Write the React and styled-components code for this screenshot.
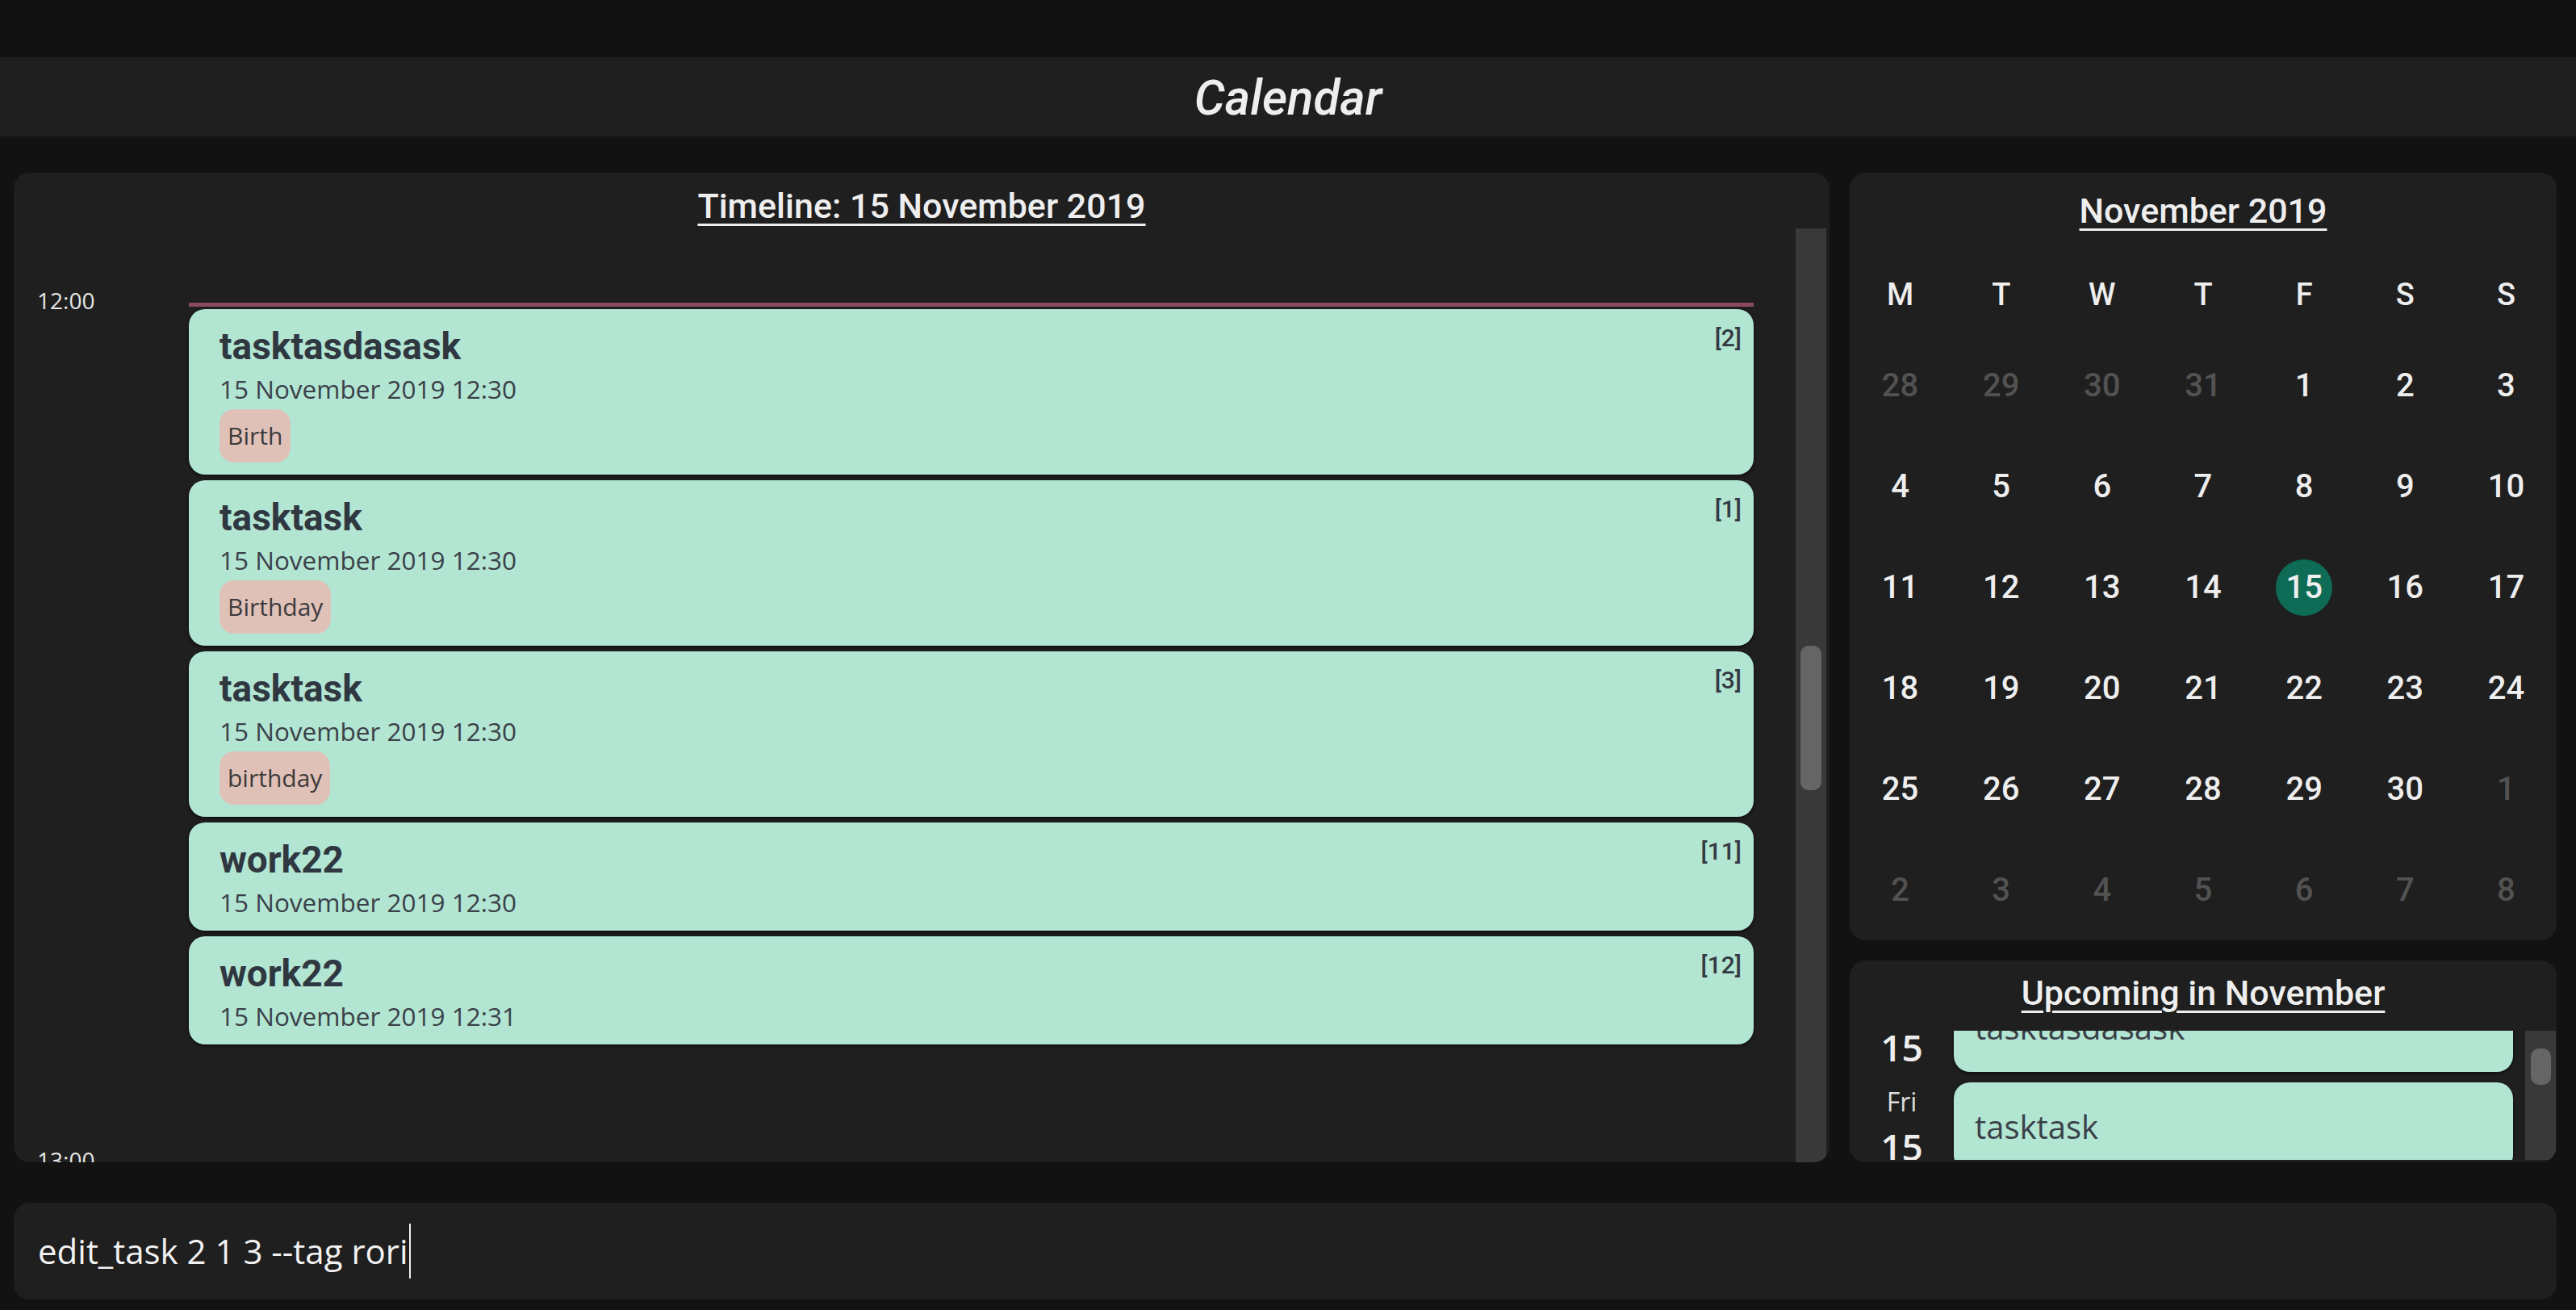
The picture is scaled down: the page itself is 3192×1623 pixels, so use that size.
import React from "react";
import styled, { createGlobalStyle } from "styled-components";

const GlobalStyle = createGlobalStyle`
  html, body {
    margin: 0;
    padding: 0;
    background: #121212;
  }
  body {
    overflow: hidden;
  }
  * {
    box-sizing: border-box;
  }
`;

const tasks = [
  { id: 2, name: "tasktasdasask", time: "15 November 2019 12:30", tags: ["Birth"] },
  { id: 1, name: "tasktask", time: "15 November 2019 12:30", tags: ["Birthday"] },
  { id: 3, name: "tasktask", time: "15 November 2019 12:30", tags: ["birthday"] },
  { id: 11, name: "work22", time: "15 November 2019 12:30", tags: [] },
  { id: 12, name: "work22", time: "15 November 2019 12:31", tags: [] },
];

const upcoming = [
  { day: "Fri", date: 15, name: "tasktasdasask" },
  { day: "Fri", date: 15, name: "tasktask" },
  { day: "Fri", date: 15, name: "tasktask" },
];

const weekDays = ["M", "T", "W", "T", "F", "S", "S"];

// Monday-first grid for November 2019
const buildMonth = () => {
  const cells = [];
  [28, 29, 30, 31].forEach((d) => cells.push({ d, muted: true }));
  for (let d = 1; d <= 30; d++) cells.push({ d, muted: false });
  for (let d = 1; d <= 8; d++) cells.push({ d, muted: true });
  return cells;
};

const App = () => {
  const days = buildMonth();

  return (
    <>
      <GlobalStyle />
      <Page>
        <TopStrip />
        <Header>
          <HeaderTitle>Calendar</HeaderTitle>
        </Header>
        <Main>
          <TimelinePanel>
            <PanelTitle $top={19} $bottom={6}>
              Timeline: 15 November 2019
            </PanelTitle>
            <TimelineBody>
              <TimelineScroll>
                <HourRow>
                  <HourLabel>12:00</HourLabel>
                  <HourEvents>
                    <NowLine />
                    {tasks.map((t) => (
                      <TaskCard key={t.id}>
                        <CardHead>
                          <TaskName>{t.name}</TaskName>
                          <TaskIndex>[{t.id}]</TaskIndex>
                        </CardHead>
                        <TaskTime>{t.time}</TaskTime>
                        {t.tags.length > 0 && (
                          <TagRow>
                            {t.tags.map((tag) => (
                              <Tag key={tag}>{tag}</Tag>
                            ))}
                          </TagRow>
                        )}
                      </TaskCard>
                    ))}
                  </HourEvents>
                </HourRow>
                <HourRow>
                  <HourLabel>13:00</HourLabel>
                  <HourEvents />
                </HourRow>
              </TimelineScroll>
              <ScrollTrack $width={38} $right={4}>
                <ScrollThumb $top={517} $height={179} $width={26} />
              </ScrollTrack>
            </TimelineBody>
          </TimelinePanel>

          <SideColumn>
            <MonthPanel>
              <PanelTitle $top={25} $bottom={32}>
                November 2019
              </PanelTitle>
              <DayGrid>
                {weekDays.map((w, i) => (
                  <DayHead key={i}>{w}</DayHead>
                ))}
                {days.map((c, i) => (
                  <DayCell key={i}>
                    <DayNum $muted={c.muted} $selected={!c.muted && c.d === 15}>
                      {c.d}
                    </DayNum>
                  </DayCell>
                ))}
              </DayGrid>
            </MonthPanel>

            <UpcomingPanel>
              <PanelTitle $top={18} $bottom={25}>
                Upcoming in November
              </PanelTitle>
              <UpcomingBody>
                <UpcomingScroll>
                  <UpcomingList>
                    {upcoming.map((u, i) => (
                      <UpcomingItem key={i}>
                        <DateCol>
                          <DayName>{u.day}</DayName>
                          <DateNum>{u.date}</DateNum>
                        </DateCol>
                        <UpcomingCard>{u.name}</UpcomingCard>
                      </UpcomingItem>
                    ))}
                  </UpcomingList>
                </UpcomingScroll>
                <ScrollTrack $width={38} $right={1}>
                  <ScrollThumb $top={22} $height={45} $width={25} />
                </ScrollTrack>
              </UpcomingBody>
            </UpcomingPanel>
          </SideColumn>
        </Main>

        <CommandBox>
          <CommandText>edit_task 2 1 3 --tag rori</CommandText>
          <Caret />
        </CommandBox>
      </Page>
    </>
  );
};

// ------------ Page frame ------------ //
const Page = styled.div`
  height: 100vh;
  display: flex;
  flex-direction: column;
  background: #121212;
  font-family: "Open Sans", "Noto Sans", sans-serif;
`;

const TopStrip = styled.div`
  height: 71px;
  flex-shrink: 0;
`;

const Header = styled.div`
  height: 98px;
  flex-shrink: 0;
  background: #1f1f1f;
  display: flex;
  align-items: center;
  justify-content: center;
`;

const HeaderTitle = styled.h1`
  margin: 2px 0 0;
  font-family: Roboto, "Liberation Sans", sans-serif;
  font-style: italic;
  font-weight: 500;
  font-size: 60px;
  color: #eeeeee;
`;

const Main = styled.div`
  margin-top: 45px;
  height: 1226px;
  flex-shrink: 0;
  display: grid;
  grid-template-columns: 1fr 876px;
  gap: 25px;
  padding: 0 24px 0 17px;
`;

const Panel = styled.div`
  background: #1f1f1f;
  border-radius: 20px;
  overflow: hidden;
`;

const PanelTitle = styled.div`
  padding-top: ${({ $top }) => $top}px;
  margin-bottom: ${({ $bottom }) => $bottom}px;
  text-align: center;
  font-family: Roboto, "Liberation Sans", sans-serif;
  font-weight: 500;
  font-size: 43px;
  line-height: 44px;
  color: #eeeeee;
  text-decoration: underline;
  text-decoration-thickness: 3px;
  text-underline-offset: 7px;
  flex-shrink: 0;
`;

// ------------ Scrollbars ------------ //
const ScrollTrack = styled.div`
  width: ${({ $width }) => $width}px;
  margin-right: ${({ $right }) => $right}px;
  flex-shrink: 0;
  background: #393939;
  display: flex;
  flex-direction: column;
  align-items: center;
`;

const ScrollThumb = styled.div`
  margin-top: ${({ $top }) => $top}px;
  width: ${({ $width }) => $width}px;
  height: ${({ $height }) => $height}px;
  border-radius: 10px;
  background: #656565;
`;

// ------------ Timeline ------------ //
const TimelinePanel = styled(Panel)`
  display: flex;
  flex-direction: column;
  min-height: 0;
`;

const TimelineBody = styled.div`
  flex: 1;
  min-height: 0;
  display: flex;
`;

const TimelineScroll = styled.div`
  flex: 1;
  overflow: hidden;
  padding-top: 75px;
`;

const HourRow = styled.div`
  display: grid;
  grid-template-columns: 217px 1fr;
  min-height: 1065px;
`;

const HourLabel = styled.div`
  padding-left: 29px;
  font-size: 28px;
  line-height: 28px;
  color: #e6e6e6;
`;

const HourEvents = styled.div`
  padding-right: 52px;
  display: flex;
  flex-direction: column;
  gap: 7px;
`;

const NowLine = styled.div`
  height: 5px;
  margin: 17px 0 -4px;
  background: #8b4a5e;
`;

const TaskCard = styled.div`
  background: #b3e5d3;
  border-radius: 20px;
  padding: 20px 15px 15px 38px;
  box-shadow: 0 2px 4px rgba(0, 0, 0, 0.55);
  color: #3a4148;
`;

const CardHead = styled.div`
  display: flex;
  justify-content: space-between;
  align-items: flex-start;
`;

const TaskName = styled.div`
  font-family: Roboto, "Liberation Sans", sans-serif;
  font-weight: 700;
  font-size: 46px;
  line-height: 52px;
  color: #2f3740;
`;

const TaskIndex = styled.div`
  font-family: Roboto, "Liberation Sans", sans-serif;
  font-weight: 500;
  font-size: 30px;
  line-height: 32px;
  color: #333a42;
`;

const TaskTime = styled.div`
  margin-top: 7px;
  font-size: 31.5px;
  line-height: 40px;
`;

const TagRow = styled.div`
  margin-top: 5px;
  display: flex;
  gap: 10px;
`;

const Tag = styled.span`
  background: #e0c1b8;
  border-radius: 18px;
  padding: 10px;
  font-size: 30px;
  line-height: 46px;
  color: #3d3a3c;
`;

// ------------ Month ------------ //
const SideColumn = styled.div`
  display: flex;
  flex-direction: column;
  gap: 25px;
  min-height: 0;
`;

const MonthPanel = styled(Panel)`
  flex-shrink: 0;
`;

const DayGrid = styled.div`
  display: grid;
  grid-template-columns: repeat(7, 1fr);
  grid-template-rows: 100px;
  grid-auto-rows: 125px;
`;

const DayHead = styled.div`
  display: flex;
  align-items: center;
  justify-content: center;
  font-family: Roboto, "Liberation Sans", sans-serif;
  font-weight: 500;
  font-size: 38px;
  color: #eeeeee;
`;

const DayCell = styled.div`
  display: flex;
  align-items: center;
  justify-content: center;
`;

const DayNum = styled.div`
  width: 70px;
  height: 70px;
  border-radius: 50%;
  display: flex;
  align-items: center;
  justify-content: center;
  font-family: Roboto, "Liberation Sans", sans-serif;
  font-weight: 500;
  font-size: 40px;
  color: ${({ $muted }) => ($muted ? "#525252" : "#eeeeee")};
  background: ${({ $selected }) => ($selected ? "#0e6b55" : "transparent")};
`;

// ------------ Upcoming ------------ //
const UpcomingPanel = styled(Panel)`
  flex: 1;
  min-height: 0;
  display: flex;
  flex-direction: column;
`;

const UpcomingBody = styled.div`
  flex: 1;
  min-height: 0;
  display: flex;
  padding-bottom: 3px;
`;

const UpcomingScroll = styled.div`
  flex: 1;
  overflow: hidden;
`;

const UpcomingList = styled.div`
  display: flex;
  flex-direction: column;
  gap: 13px;
  transform: translateY(-59px);
`;

const UpcomingItem = styled.div`
  display: grid;
  grid-template-columns: 129px 1fr;
  padding-right: 15px;
`;

const DateCol = styled.div`
  display: flex;
  flex-direction: column;
  align-items: center;
`;

const DayName = styled.div`
  margin-top: 4px;
  font-size: 32px;
  line-height: 40px;
  color: #dddddd;
`;

const DateNum = styled.div`
  margin-top: 10px;
  font-weight: 600;
  font-size: 46px;
  line-height: 50px;
  color: #eeeeee;
`;

const UpcomingCard = styled.div`
  background: #b3e5d3;
  border-radius: 20px;
  padding: 28px 26px;
  box-shadow: 0 2px 4px rgba(0, 0, 0, 0.55);
  font-size: 40px;
  line-height: 54px;
  color: #3a4148;
`;

// ------------ Command box ------------ //
const CommandBox = styled.div`
  margin: 50px 24px 0 17px;
  height: 120px;
  flex-shrink: 0;
  background: #1f1f1f;
  border-radius: 20px;
  display: flex;
  align-items: center;
  padding-left: 30px;
`;

const CommandText = styled.span`
  font-size: 42px;
  line-height: 54px;
  color: #f2f2f2;
  white-space: pre;
`;

const Caret = styled.span`
  display: inline-block;
  width: 2px;
  height: 68px;
  margin-left: 1px;
  background: #eeeeee;
`;

export default App;
